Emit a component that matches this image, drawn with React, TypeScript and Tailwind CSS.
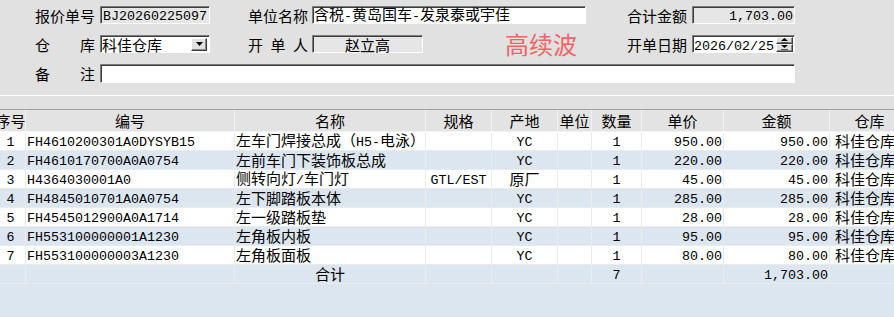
import React from "react";

const CJK = "font-['Noto_Sans_CJK_SC',sans-serif]";
const MONO = "font-['Liberation_Mono','Noto_Sans_CJK_SC',monospace]";

// half-width runs in mono, the rest in CJK, all on one baseline
function Mixed({ s }: { s: string }) {
  const parts = s.match(/[\x00-\x7f]+|[^\x00-\x7f]+/g) || [];
  return (
    <span className="whitespace-nowrap leading-[12px]">
      {parts.map((p, i) =>
        /^[\x00-\x7f]+$/.test(p) ? (
          <span key={i} className={`${MONO} text-[13.33px] leading-[12px]`}>{p}</span>
        ) : (
          <span key={i} className={`${CJK} text-[15px] leading-[12px]`}>{p}</span>
        )
      )}
    </span>
  );
}

const sunken =
  "border border-t-[#7c7c7c] border-l-[#7c7c7c] border-b-white border-r-white shadow-[inset_1px_1px_0_#3c3c3c]";
const raised =
  "border border-t-white border-l-white border-b-[#3c3c3c] border-r-[#3c3c3c] shadow-[inset_-1px_-1px_0_#8a8a8a]";

function Label({ text, spread }: { text: string; spread?: boolean }) {
  return (
    <div className={`w-[60px] flex ${spread ? "justify-between" : ""} ${CJK} text-[15px] leading-none text-black`}>
      {spread ? text.split("").map((c, i) => <span key={i}>{c}</span>) : text}
    </div>
  );
}

const cols = [
  { w: "w-[30px]", h: "序号", a: "justify-center" },
  { w: "w-[209px]", h: "编号", a: "justify-start pl-[1px]" },
  { w: "w-[191px]", h: "名称", a: "justify-start pl-[1px]" },
  { w: "w-[66px]", h: "规格", a: "justify-center" },
  { w: "w-[66px]", h: "产地", a: "justify-center" },
  { w: "w-[34px]", h: "单位", a: "justify-center" },
  { w: "w-[50px]", h: "数量", a: "justify-center" },
  { w: "w-[82px]", h: "单价", a: "justify-end pr-[1px]" },
  { w: "w-[106px]", h: "金额", a: "justify-end pr-[1px]" },
  { w: "w-[80px]", h: "仓库", a: "justify-start pl-[5px]" },
];

const rows = [
  ["1", "FH4610200301A0DYSYB15", "左车门焊接总成（H5-电泳）", "", "YC", "", "1", "950.00", "950.00", "科佳仓库"],
  ["2", "FH4610170700A0A0754", "左前车门下装饰板总成", "", "YC", "", "1", "220.00", "220.00", "科佳仓库"],
  ["3", "H4364030001A0", "侧转向灯/车门灯", "GTL/EST", "原厂", "", "1", "45.00", "45.00", "科佳仓库"],
  ["4", "FH4845010701A0A0754", "左下脚踏板本体", "", "YC", "", "1", "285.00", "285.00", "科佳仓库"],
  ["5", "FH4545012900A0A1714", "左一级踏板垫", "", "YC", "", "1", "28.00", "28.00", "科佳仓库"],
  ["6", "FH553100000001A1230", "左角板内板", "", "YC", "", "1", "95.00", "95.00", "科佳仓库"],
  ["7", "FH553100000003A1230", "左角板面板", "", "YC", "", "1", "80.00", "80.00", "科佳仓库"],
];

const total = ["", "", "合计", "", "", "", "7", "", "1,703.00", ""];

function Row({ cells, blue }: { cells: string[]; blue: boolean }) {
  return (
    <div className={`flex h-[19px] border-b border-[#ebebeb] ${blue ? "bg-[#dce6f0]" : "bg-white"}`}>
      {cells.map((c, i) => (
        <div
          key={i}
          className={`${cols[i].w} ${i === 2 && c === "合计" ? "justify-center" : cols[i].a} shrink-0 flex items-center h-full border-r border-[#ebebeb] overflow-hidden text-black`}
        >
          {c && <Mixed s={c} />}
        </div>
      ))}
    </div>
  );
}

export default function App() {
  return (
    <div className="w-[894px] h-[317px] flex flex-col bg-[#e1e1e1] overflow-hidden">
      {/* SECTION form */}
      <div className="h-[96px] border-b border-white pt-[6px] pl-[35px] flex flex-col gap-[11px]">
        <div className="flex items-center h-[18px]">
          <Label text="报价单号" />
          <div className={`ml-[5px] w-[110px] h-[18px] bg-[#e6e6e6] ${sunken} flex items-center pl-[2px]`}>
            <Mixed s="BJ20260225097" />
          </div>
          <div className="ml-[38px]"><Label text="单位名称" /></div>
          <div className={`ml-[4px] w-[274px] h-[18px] bg-white ${sunken} flex items-center pl-[1px]`}>
            <Mixed s="含税-黄岛国车-发泉泰或宇佳" />
          </div>
          <div className="ml-[41px]"><Label text="合计金额" /></div>
          <div className={`ml-[5px] w-[103px] h-[18px] bg-[#e6e6e6] ${sunken} flex items-center justify-end pr-[1px]`}>
            <Mixed s="1,703.00" />
          </div>
        </div>

        <div className="flex items-center h-[18px]">
          <Label text="仓库" spread />
          <div className={`ml-[5px] w-[110px] h-[18px] bg-white ${sunken} flex items-center pl-[1px] pr-[2px]`}>
            <span className={`${CJK} text-[15px] leading-none flex-1`}>科佳仓库</span>
            <div className={`w-[16px] h-[13px] bg-[#e1e1e1] ${raised} flex items-center justify-center`}>
              <svg width="7" height="4" viewBox="0 0 7 4"><path d="M0 0H7L3.5 4Z" fill="#000" /></svg>
            </div>
          </div>
          <div className="ml-[38px]"><Label text="开单人" spread /></div>
          <div className={`ml-[4px] w-[111px] h-[18px] bg-[#e6e6e6] ${sunken} flex items-center justify-center`}>
            <span className={`${CJK} text-[15px] leading-none`}>赵立高</span>
          </div>
          <div className={`ml-[82px] w-[122px] ${CJK} text-[24px] leading-none text-[#f26464]`}>高续波</div>
          <Label text="开单日期" />
          <div className={`ml-[5px] w-[103px] h-[18px] bg-white ${sunken} flex items-center pl-[1px] pr-[1px]`}>
            <span className="flex-1"><Mixed s="2026/02/25" /></span>
            <div className="flex flex-col w-[17px] h-[15px]">
              <div className={`flex-1 bg-[#e1e1e1] ${raised} flex items-center justify-center`}>
                <svg width="7" height="5" viewBox="0 0 7 5"><path d="M0 3H7L3.5 0Z" fill="#000" /><rect x="0" y="4" width="7" height="1" fill="#555" /></svg>
              </div>
              <div className={`flex-1 bg-[#e1e1e1] ${raised} flex items-center justify-center`}>
                <svg width="7" height="5" viewBox="0 0 7 5"><path d="M0 0H7L3.5 3Z" fill="#000" /><rect x="0" y="4" width="7" height="1" fill="#555" /></svg>
              </div>
            </div>
          </div>
        </div>

        <div className="flex items-center h-[19px]">
          <Label text="备注" spread />
          <div className={`ml-[5px] w-[695px] h-[19px] bg-white ${sunken}`} />
        </div>
      </div>

      {/* SECTION strip */}
      <div className="h-[13px]" />

      {/* SECTION grid */}
      <div className="flex-1 border-t border-[#a0a0a0] bg-[#dce6f0] overflow-hidden">
        <div className="ml-[-4px] w-[920px]">
          <div className="flex h-[22px] bg-[#e3e3e3] border-b border-[#f4f4f4]">
            {cols.map((c, i) => (
              <div
                key={i}
                className={`${c.w} shrink-0 flex items-center justify-center h-full border-r border-[#f4f4f4] whitespace-nowrap ${CJK} text-[15px] leading-none text-black`}
              >
                {c.h}
              </div>
            ))}
          </div>
          {rows.map((r, i) => (
            <Row key={i} cells={r} blue={i % 2 === 1} />
          ))}
          <Row cells={total} blue />
        </div>
      </div>
    </div>
  );
}
